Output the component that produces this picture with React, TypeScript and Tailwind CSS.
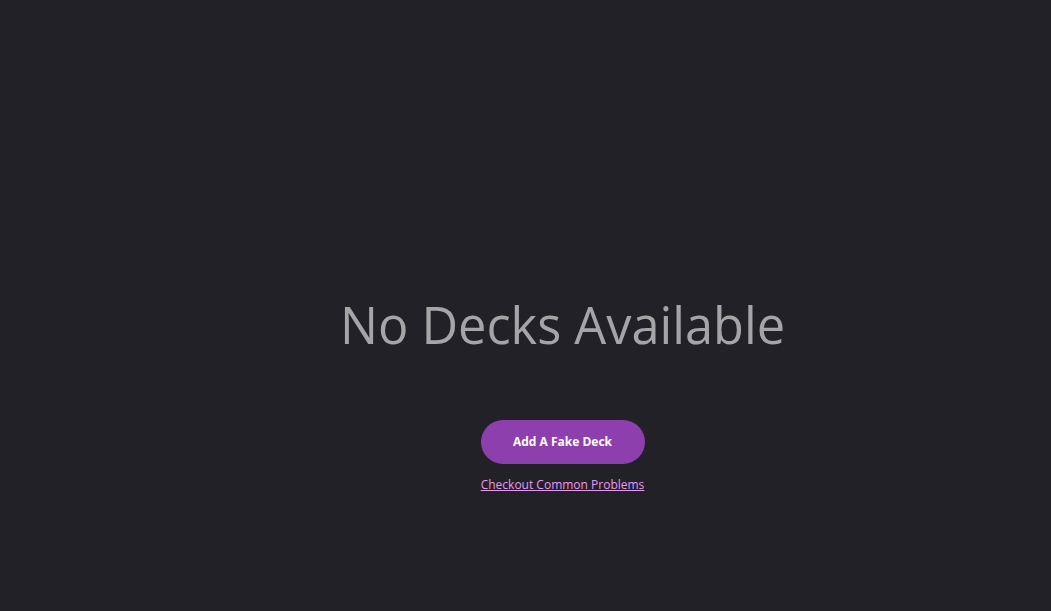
export default function App() {
  return (
    <div
      className="w-[1051px] h-[611px] bg-[#222127] flex flex-col items-center pl-[74px] pt-[293px]"
      style={{ fontFamily: '"Open Sans", sans-serif' }}
    >
      <h1 className="text-[50.5px] leading-[64px] text-[#a5a5a7] font-normal">No Decks Available</h1>
      <button className="mt-[63px] w-[164px] h-[44px] rounded-full bg-[#8e3fae] text-white text-[12px] font-bold">
        Add A Fake Deck
      </button>
      <a href="#" className="mt-[12px] text-[12px] text-[#e79bf0] underline leading-[17px]">
        Checkout Common Problems
      </a>
    </div>
  );
}
